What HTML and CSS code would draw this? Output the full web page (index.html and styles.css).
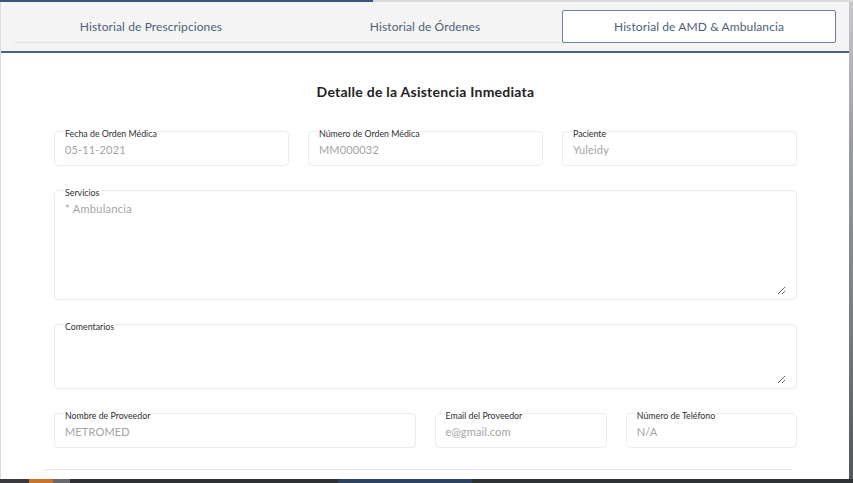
FILE: index.html
```html
<!DOCTYPE html>
<html lang="es">
<head>
<meta charset="utf-8">
<title>Detalle de la Asistencia Inmediata</title>
<link rel="stylesheet" href="styles.css">
</head>
<body>
<div class="top-strip"></div>
<div class="stage">
  <div class="modal">
    <div class="modal-header">
      <nav class="tabs">
        <button class="tab">Historial de Prescripciones</button>
        <button class="tab">Historial de Órdenes</button>
        <button class="tab active">Historial de AMD &amp; Ambulancia</button>
      </nav>
    </div>
    <div class="modal-body">
      <h2 class="title">Detalle de la Asistencia Inmediata</h2>
      <div class="row row-3">
        <fieldset class="field"><legend>Fecha de Orden Médica</legend><div class="value">05-11-2021</div></fieldset>
        <fieldset class="field"><legend>Número de Orden Médica</legend><div class="value">MM000032</div></fieldset>
        <fieldset class="field"><legend>Paciente</legend><div class="value">Yuleidy</div></fieldset>
      </div>
      <fieldset class="field area"><legend>Servicios</legend><textarea class="ta ta-tall" readonly>* Ambulancia</textarea></fieldset>
      <fieldset class="field area"><legend>Comentarios</legend><textarea class="ta ta-short" readonly></textarea></fieldset>
      <div class="row row-prov">
        <fieldset class="field"><legend>Nombre de Proveedor</legend><div class="value">METROMED</div></fieldset>
        <fieldset class="field"><legend>Email del Proveedor</legend><div class="value">e@gmail.com</div></fieldset>
        <fieldset class="field"><legend>Número de Teléfono</legend><div class="value">N/A</div></fieldset>
      </div>
      <hr class="divider">
    </div>
  </div>
  <div class="side-strip"></div>
</div>
<div class="bottom-strip"></div>
</body>
</html>
```

FILE: styles.css
```css
* { box-sizing: border-box; }
html, body { margin: 0; padding: 0; }
body {
  width: 853px;
  height: 483px;
  overflow: hidden;
  background: #8e9095;
  font-family: Lato, "Open Sans", sans-serif;
}
.top-strip {
  height: 2px;
  background: linear-gradient(to right, #3b5575 0, #3b5575 373px, #d9dadc 373px, #d9dadc 100%);
}
.stage {
  display: flex;
  height: 477px;
}
.modal {
  width: 849px;
  background: #ffffff;
  border-left: 1px solid #dcdcdc;
  display: flex;
  flex-direction: column;
  overflow: hidden;
}
.side-strip {
  flex: 1;
  background: linear-gradient(to bottom, #c9c9cc 0, #9a9ba0 30%, #77797e 70%, #54565b 100%);
}
.bottom-strip {
  height: 4px;
  background: linear-gradient(to right,
    #3a3a3c 0, #3a3a3c 29px,
    #c8742f 29px, #c8742f 53px,
    #6a6a6c 53px, #6a6a6c 70px,
    #2e2f31 70px, #2e2f31 338px,
    #2c425f 338px, #2c425f 472px,
    #303133 472px);
}
.modal-header {
  background: #f4f4f4;
  padding: 8px 13px 0 13px;
  height: 51px;
  flex: none;
  border-bottom: 2px solid #49637f;
}
.tabs {
  display: grid;
  grid-template-columns: repeat(3, 1fr);
  border-bottom: 1px solid #e4e4e4;
}
.tab {
  height: 33px;
  margin-bottom: -1px;
  border: 1px solid transparent;
  border-radius: 2px;
  background: transparent;
  font-family: Lato, "Open Sans", sans-serif;
  font-size: 12px;
  color: #4d5f79;
  letter-spacing: 0.1px;
  padding: 0;
}
.tab.active {
  background: #ffffff;
  border-color: #6e829c;
}
.modal-body {
  padding: 0 52px 0 53px;
}
.title {
  margin: 0;
  padding-top: 30px;
  height: 72px;
  text-align: center;
  font-size: 14px;
  font-weight: 700;
  color: #222222;
  line-height: 18px;
  letter-spacing: 0.25px;
}
.row {
  display: grid;
  gap: 19px;
}
.row-3 { grid-template-columns: repeat(3, 1fr); }
.row-prov { grid-template-columns: 361fr 172fr 171fr; }
.field {
  margin: 0;
  border: 1px solid #ececec;
  border-radius: 4px;
  padding: 0 10px 0 10px;
  min-width: 0;
}
.field legend {
  font-size: 8.8px;
  line-height: 8px;
  color: #2e2e2e;
  padding: 5px 1px 0 1px;
  margin-left: -1px;
}
.value {
  font-size: 11px;
  color: #a3a3a3;
  height: 27px;
  padding-top: 4px;
  line-height: 15px;
  letter-spacing: 0.15px;
}
.area {
  margin-top: 18px;
  padding-bottom: 4px;
}
.row-prov { margin-top: 18px; }
.ta {
  display: block;
  width: 100%;
  border: none;
  outline: none;
  resize: vertical;
  padding: 5px 0 0 0;
  font-family: Lato, "Open Sans", sans-serif;
  font-size: 11px;
  color: #a3a3a3;
  letter-spacing: 0.3px;
  background: transparent;
}
.ta-tall { height: 98px; }
.ta-short { height: 53px; }
.divider {
  border: none;
  border-top: 1px solid #e6e6e6;
  margin: 21px 5px 0 -9px;
}
```
